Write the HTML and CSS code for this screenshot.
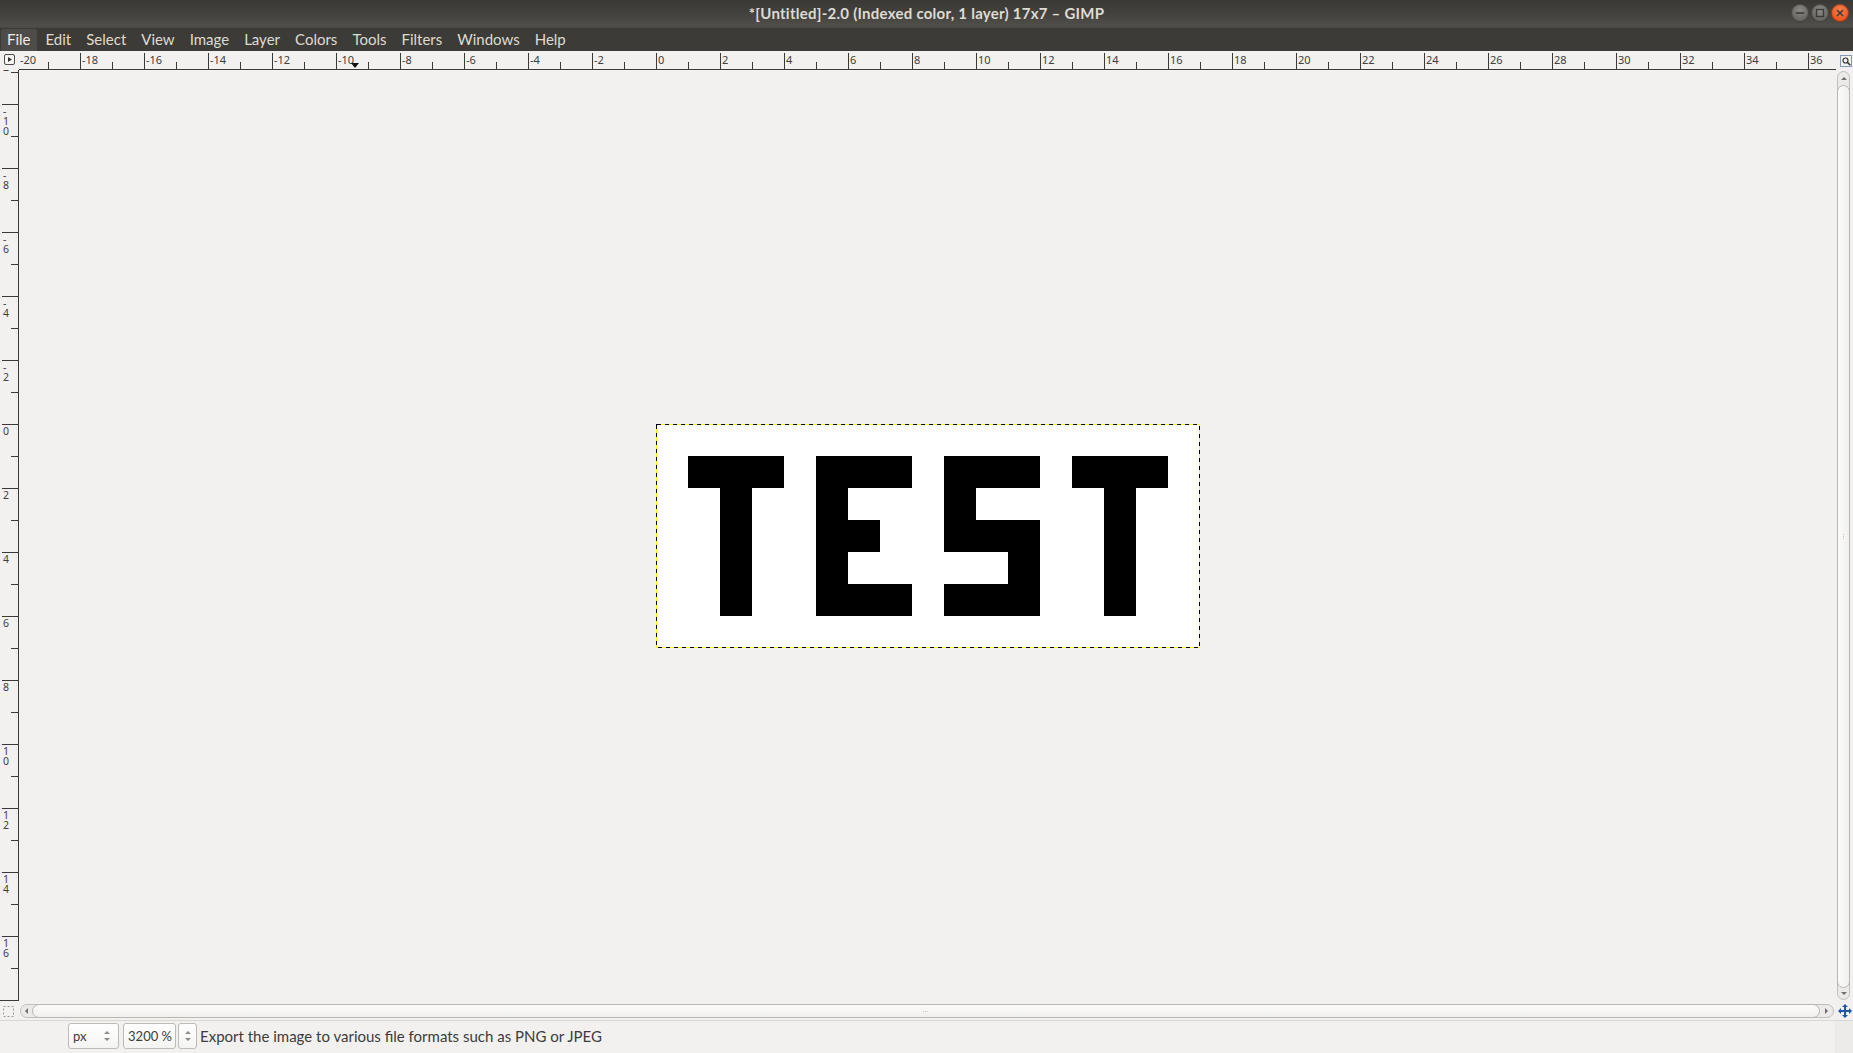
FILE: index.html
```html
<!DOCTYPE html>
<html>
<head>
<meta charset="utf-8">
<title>GIMP</title>
<link rel="stylesheet" href="styles.css">
</head>
<body>
<div class="window">
  <div class="titlebar">
    <div class="title">*[Untitled]-2.0 (Indexed color, 1 layer) 17x7 – GIMP</div>
    <div class="winbtns">
      <span class="wbtn wbtn-min"><svg width="18" height="18" viewBox="0 0 18 18"><path d="M5 9h8" stroke="#3a3935" stroke-width="1.6"/></svg></span>
      <span class="wbtn wbtn-max"><svg width="18" height="18" viewBox="0 0 18 18"><rect x="5.5" y="5.5" width="7" height="7" fill="none" stroke="#3a3935" stroke-width="1.3"/></svg></span>
      <span class="wbtn wbtn-close"><svg width="18" height="18" viewBox="0 0 18 18"><path d="M6 6l6 6M12 6l-6 6" stroke="#3a3935" stroke-width="1.5"/></svg></span>
    </div>
  </div>
  <div class="menubar">
    <span class="menu-item active">File</span>
    <span class="menu-item">Edit</span>
    <span class="menu-item">Select</span>
    <span class="menu-item">View</span>
    <span class="menu-item">Image</span>
    <span class="menu-item">Layer</span>
    <span class="menu-item">Colors</span>
    <span class="menu-item">Tools</span>
    <span class="menu-item">Filters</span>
    <span class="menu-item">Windows</span>
    <span class="menu-item">Help</span>
  </div>
  <div class="work">
    <div class="corner">
      <svg width="12" height="12" viewBox="0 0 12 12"><rect x="0.5" y="0.5" width="10" height="10" rx="1.5" fill="#f6f5f4" stroke="#4d4d4d"/><path d="M4 3l4 2.5L4 8z" fill="#333"/></svg>
    </div>
    <div class="hruler">
      <div class="hcell first"><span>-20</span></div>
      <div class="hcell"><span>-18</span></div>
      <div class="hcell"><span>-16</span></div>
      <div class="hcell"><span>-14</span></div>
      <div class="hcell"><span>-12</span></div>
      <div class="hcell"><span>-10</span></div>
      <div class="hcell"><span>-8</span></div>
      <div class="hcell"><span>-6</span></div>
      <div class="hcell"><span>-4</span></div>
      <div class="hcell"><span>-2</span></div>
      <div class="hcell"><span>0</span></div>
      <div class="hcell"><span>2</span></div>
      <div class="hcell"><span>4</span></div>
      <div class="hcell"><span>6</span></div>
      <div class="hcell"><span>8</span></div>
      <div class="hcell"><span>10</span></div>
      <div class="hcell"><span>12</span></div>
      <div class="hcell"><span>14</span></div>
      <div class="hcell"><span>16</span></div>
      <div class="hcell"><span>18</span></div>
      <div class="hcell"><span>20</span></div>
      <div class="hcell"><span>22</span></div>
      <div class="hcell"><span>24</span></div>
      <div class="hcell"><span>26</span></div>
      <div class="hcell"><span>28</span></div>
      <div class="hcell"><span>30</span></div>
      <div class="hcell"><span>32</span></div>
      <div class="hcell"><span>34</span></div>
      <div class="hcell"><span>36</span></div>
      <div class="pointer"></div>
    </div>
    <div class="zoombtn">
      <svg width="12" height="12" viewBox="0 0 12 12"><rect x="0.5" y="0.5" width="11" height="11" fill="none" stroke="#1d3f7a" stroke-dasharray="1 1"/><circle cx="5.5" cy="5.5" r="2.5" fill="none" stroke="#333" stroke-width="1.2"/><path d="M7.3 7.3l3 3" stroke="#333" stroke-width="1.6"/></svg>
    </div>

    <div class="vruler">
      <div class="vcell first"><span>-<br>1<br>2</span></div>
      <div class="vcell"><span>-<br>1<br>0</span></div>
      <div class="vcell"><span>-<br>8</span></div>
      <div class="vcell"><span>-<br>6</span></div>
      <div class="vcell"><span>-<br>4</span></div>
      <div class="vcell"><span>-<br>2</span></div>
      <div class="vcell"><span>0</span></div>
      <div class="vcell"><span>2</span></div>
      <div class="vcell"><span>4</span></div>
      <div class="vcell"><span>6</span></div>
      <div class="vcell"><span>8</span></div>
      <div class="vcell"><span>1<br>0</span></div>
      <div class="vcell"><span>1<br>2</span></div>
      <div class="vcell"><span>1<br>4</span></div>
      <div class="vcell"><span>1<br>6</span></div>
      <div class="vcell"><span>1<br>8</span></div>
    </div>
    <div class="canvas-area">
      <svg class="image" width="544" height="224" viewBox="0 0 544 224" shape-rendering="crispEdges">
        <rect x="0" y="0" width="544" height="224" fill="#fff"/>
        <g fill="#000">
          <rect x="32" y="32" width="96" height="32"/>
          <rect x="64" y="64" width="32" height="128"/>
          <rect x="160" y="32" width="96" height="32"/>
          <rect x="160" y="64" width="32" height="128"/>
          <rect x="192" y="96" width="32" height="32"/>
          <rect x="192" y="160" width="64" height="32"/>
          <rect x="288" y="32" width="96" height="32"/>
          <rect x="288" y="64" width="32" height="32"/>
          <rect x="288" y="96" width="96" height="32"/>
          <rect x="352" y="128" width="32" height="32"/>
          <rect x="288" y="160" width="96" height="32"/>
          <rect x="416" y="32" width="96" height="32"/>
          <rect x="448" y="64" width="32" height="128"/>
        </g>
        <rect x="0.5" y="0.5" width="543" height="223" fill="none" stroke="#ffff00" stroke-width="1"/>
        <rect x="0.5" y="0.5" width="543" height="223" fill="none" stroke="#000" stroke-width="1" stroke-dasharray="4 4"/>
      </svg>
    </div>
    <div class="vscroll">
      <div class="vtrough">
        <span class="arr arr-up"></span>
        <div class="vthumb"><span class="vgrip"></span></div>
        <span class="arr arr-down"></span>
      </div>
    </div>

    <div class="qmask">
      <svg width="11" height="11" viewBox="0 0 11 11"><rect x="0.5" y="0.5" width="10" height="10" fill="none" stroke="#9a9a9a" stroke-dasharray="2 2"/></svg>
    </div>
    <div class="hscroll">
      <div class="htrough">
        <span class="arr arr-left"></span>
        <div class="hthumb"><span class="hgrip"></span></div>
        <span class="arr arr-right"></span>
      </div>
    </div>
    <div class="navbtn">
      <svg width="14" height="14" viewBox="0 0 14 14"><path d="M7 0l3 3H8v3h3V4l3 3-3 3V8H8v3h2l-3 3-3-3h2V8H3v2L0 7l3-3v2h3V3H4z" fill="#2456a6"/></svg>
    </div>
  </div>
  <div class="statusbar">
    <div class="combo"><span>px</span><svg class="spin-ic" width="6" height="12" viewBox="0 0 6 12"><path d="M0 4l3-3 3 3zM0 8l3 3 3-3z" fill="#8a8a8a"/></svg></div>
    <div class="zoomentry">3200 %</div>
    <div class="spin"><svg class="spin-ic" width="6" height="12" viewBox="0 0 6 12"><path d="M0 4l3-3 3 3zM0 8l3 3 3-3z" fill="#8a8a8a"/></svg></div>
    <div class="message">Export the image to various file formats such as PNG or JPEG</div>
  </div>
</div>
</body>
</html>
```
FILE: styles.css
```css
html, body {
  margin: 0;
  padding: 0;
}
body {
  width: 1853px;
  height: 1053px;
  overflow: hidden;
  background: #f2f1f0;
  font-family: Lato, "Noto Sans", sans-serif;
}
.window {
  display: flex;
  flex-direction: column;
  height: 1053px;
}

/* title bar */
.titlebar {
  flex: none;
  height: 28px;
  background: linear-gradient(#393834, #45433f 55%, #504e49 92%, #4a4843);
  display: grid;
  grid-template-columns: 1fr auto 1fr;
  align-items: center;
}
.title {
  grid-column: 2;
  color: #dfdbd2;
  font-weight: 700;
  font-size: 15px;
  letter-spacing: 0.25px;
  padding-bottom: 2px;
}
.winbtns {
  grid-column: 3;
  justify-self: end;
  display: flex;
  gap: 2px;
  padding-right: 4px;
  margin-top: -2px;
}
.wbtn {
  width: 18px;
  height: 18px;
  border-radius: 50%;
  box-sizing: border-box;
  display: block;
  box-shadow: inset 0 0 0 1px rgba(0,0,0,0.35);
}
.wbtn svg { display: block; }
.wbtn-min, .wbtn-max {
  background: radial-gradient(circle at 50% 35%, #8b8984, #6b6964 60%, #5a5854);
}
.wbtn-close {
  background: radial-gradient(circle at 50% 35%, #f7814f, #ec5a24 60%, #d8491a);
}

/* menu bar */
.menubar {
  flex: none;
  height: 23px;
  background: #3c3b37;
  display: flex;
  gap: 3px;
  padding-left: 1px;
}
.menu-item {
  padding: 0 6px;
  margin-top: 1px;
  color: #dfdbd2;
  font-size: 15px;
  line-height: 21px;
  border-radius: 3px 3px 0 0;
}
.menu-item.active {
  background: #4e4c48;
  color: #f0eee9;
}

/* workspace grid */
.work {
  flex: 1;
  display: grid;
  grid-template-columns: 19px 1fr 17px;
  grid-template-rows: 19px 1fr 19px;
  background: #f2f1f0;
  min-height: 0;
}
.corner {
  padding: 3px 0 0 4px;
}
.corner svg, .zoombtn svg, .qmask svg, .navbtn svg { display: block; }

.hruler {
  position: relative;
  display: flex;
  overflow: hidden;
  border-bottom: 1px solid #3a3a3a;
  color: #404040;
  font-family: "Noto Sans", sans-serif;
  font-size: 11px;
}
.hcell {
  position: relative;
  flex: none;
  width: 64px;
  height: 16px;
  margin-top: 2px;
  box-sizing: border-box;
  border-left: 1px solid #3a3a3a;
}
.hcell.first { margin-left: -3px; }
.hcell span {
  display: block;
  line-height: 11px;
  padding: 1px 0 0 1px;
}
.hcell.first span { padding-left: 3px; }
.hcell::after {
  content: "";
  position: absolute;
  left: 31px;
  bottom: 0;
  width: 1px;
  height: 7px;
  background: #3a3a3a;
}
.pointer {
  position: absolute;
  left: 332px;
  top: 12px;
  width: 0;
  height: 0;
  border-left: 4px solid transparent;
  border-right: 4px solid transparent;
  border-top: 5px solid #111;
}
.zoombtn {
  padding: 4px 0 0 4px;
}

.vruler {
  display: flex;
  flex-direction: column;
  overflow: hidden;
  border-right: 1px solid #3a3a3a;
  border-bottom: 1px solid #3a3a3a;
  color: #404040;
  font-family: "Noto Sans", sans-serif;
  font-size: 10.5px;
}
.vcell {
  position: relative;
  flex: none;
  height: 64px;
  margin-left: 2px;
  box-sizing: border-box;
  border-top: 1px solid #3a3a3a;
}
.vcell.first { margin-top: -30px; }
.vcell span {
  display: block;
  line-height: 10px;
  padding: 1px 0 0 1px;
}
.vcell::after {
  content: "";
  position: absolute;
  top: 31px;
  right: 0;
  width: 7px;
  height: 1px;
  background: #3a3a3a;
}

.canvas-area {
  display: flex;
  align-items: center;
  justify-content: center;
  overflow: hidden;
  background: #f2f1f0;
}
.image { display: block; }

/* scrollbars */
.vscroll {
  padding: 1px 3px 1px 1px;
  display: flex;
}
.vtrough {
  flex: 1;
  display: flex;
  flex-direction: column;
  align-items: center;
  border: 1px solid #c2bfba;
  border-radius: 7px;
  background: #ebeae8;
}
.vthumb {
  flex: 1;
  align-self: stretch;
  margin: 0 -1px;
  border: 1px solid #b9b6b1;
  border-radius: 7px;
  background: linear-gradient(90deg, #fbfbfa, #f1f0ef);
  display: flex;
  align-items: center;
  justify-content: center;
}
.vgrip {
  width: 1px;
  height: 6px;
  background: repeating-linear-gradient(#c8c5c0 0 1px, transparent 1px 2px);
}
.hscroll {
  padding: 3px 2px 2px 1px;
  display: flex;
}
.htrough {
  flex: 1;
  display: flex;
  align-items: center;
  border: 1px solid #c2bfba;
  border-radius: 7px;
  background: #ebeae8;
}
.hthumb {
  flex: 1;
  align-self: stretch;
  margin: -1px 0;
  border: 1px solid #b9b6b1;
  border-radius: 7px;
  background: linear-gradient(#fbfbfa, #f1f0ef);
  display: flex;
  align-items: center;
  justify-content: center;
}
.hgrip {
  width: 6px;
  height: 1px;
  background: repeating-linear-gradient(90deg, #c8c5c0 0 1px, transparent 1px 2px);
}
.arr {
  flex: none;
  width: 0;
  height: 0;
}
.arr-up {
  margin: 5px 0 5px;
  border-left: 3px solid transparent;
  border-right: 3px solid transparent;
  border-bottom: 3px solid #6f6f6f;
}
.arr-down {
  margin: 4px 0 4px;
  border-left: 3px solid transparent;
  border-right: 3px solid transparent;
  border-top: 3px solid #6f6f6f;
}
.arr-left {
  margin: 0 4px 0 4px;
  border-top: 3px solid transparent;
  border-bottom: 3px solid transparent;
  border-right: 3px solid #6f6f6f;
}
.arr-right {
  margin: 0 5px 0 5px;
  border-top: 3px solid transparent;
  border-bottom: 3px solid transparent;
  border-left: 3px solid #6f6f6f;
}
.qmask {
  padding: 5px 0 0 3px;
}
.navbtn {
  padding: 3px 0 0 2px;
}

/* status bar */
.statusbar {
  flex: none;
  height: 33px;
  box-sizing: border-box;
  border-top: 1px solid #dad7d2;
  display: flex;
  align-items: flex-start;
  padding: 2px 0 0 68px;
  color: #3c3c3c;
  background: linear-gradient(90deg, #f2f1f0 1835px, #ecebe9 1835px);
}
.combo, .zoomentry, .spin {
  height: 26px;
  box-sizing: border-box;
  border: 1px solid #bebbb5;
  border-radius: 3px;
  background: linear-gradient(#ffffff, #f4f4f3);
  display: flex;
  align-items: center;
  font-size: 13px;
}
.combo {
  width: 51px;
  justify-content: space-between;
  padding: 0 8px 0 4px;
}
.zoomentry {
  width: 53px;
  margin-left: 4px;
  justify-content: flex-end;
  padding-right: 3px;
  white-space: nowrap;
}
.spin {
  width: 19px;
  margin-left: 2px;
  justify-content: center;
}
.spin-ic { display: block; }
.message {
  margin-left: 3px;
  font-size: 15px;
  line-height: 26px;
}
```
